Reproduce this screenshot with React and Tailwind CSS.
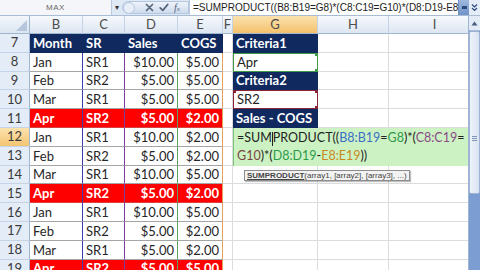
import React from "react";

const rows = [
  [8, "Jan", "SR1", "$10.00", "$5.00"],
  [9, "Feb", "SR2", "$5.00", "$5.00"],
  [10, "Mar", "SR1", "$5.00", "$5.00"],
  [11, "Apr", "SR2", "$5.00", "$2.00"],
  [12, "Jan", "SR1", "$10.00", "$2.00"],
  [13, "Feb", "SR2", "$5.00", "$2.00"],
  [14, "Mar", "SR1", "$10.00", "$5.00"],
  [15, "Apr", "SR2", "$5.00", "$2.00"],
  [16, "Jan", "SR1", "$10.00", "$5.00"],
  [17, "Feb", "SR2", "$5.00", "$2.00"],
  [18, "Mar", "SR1", "$5.00", "$2.00"],
  [19, "Apr", "SR2", "$5.00", "$5.00"],
];

// right border colours of the referenced ranges B, C, D, E
const rangeBorder = [
  "border-r-[#3d3db0]",
  "border-r-[#7b3e9e]",
  "border-r-[#5f9f62]",
  "border-r-[#e6a15c]",
];

const gCells = {
  7: { text: "Criteria1", kind: "navy" },
  8: { text: "Apr", kind: "green" },
  9: { text: "Criteria2", kind: "navy" },
  10: { text: "SR2", kind: "red" },
  11: { text: "Sales - COGS", kind: "navy" },
};

const cell = "flex items-end pb-[1px] leading-[15px] overflow-hidden whitespace-nowrap";
const plain = "border-b border-r border-[#dadcdd] bg-white";

function RowHead({ n, active }) {
  return (
    <div
      className={
        "flex items-center justify-center leading-[15px] border-b border-r border-b-[#c5d3e6] border-r-[#9eb6ce] text-[#3a3a3a] " +
        (active
          ? "bg-linear-to-b from-[#fbe2ad] to-[#f4c572]"
          : "bg-[#e4ecf7]")
      }
    >
      {n}
    </div>
  );
}

function ColHead({ label, active }) {
  return (
    <div
      className={
        "flex items-center justify-center leading-[15px] border-b border-r border-b-[#9eb6ce] border-r-[#c5d3e6] text-[#4d4d4d] " +
        (active
          ? "bg-linear-to-b from-[#fbe2ad] to-[#f3c16c]"
          : "bg-linear-to-b from-[#f6f9fd] to-[#dde6f1]")
      }
    >
      {label}
    </div>
  );
}

function GCell({ n }) {
  const g = gCells[n];
  if (!g) return <div className={plain}></div>;
  if (g.kind === "navy")
    return (
      <div className={cell + " bg-[#10295f] text-white font-bold px-[3px] border-b border-r border-[#10295f]"}>
        {g.text}
      </div>
    );
  if (g.kind === "green")
    return (
      <div className={cell + " relative bg-white text-[#222] px-[3px] border border-[#3f9b46]"}>
        {g.text}
        <span className="absolute -right-[2px] -bottom-[2px] w-[4px] h-[4px] bg-[#3f9b46]"></span>
        <span className="absolute -right-[2px] -top-[2px] w-[4px] h-[4px] bg-[#3f9b46]"></span>
      </div>
    );
  return (
    <div className={cell + " relative bg-white text-[#222] px-[3px] border border-[#8a2436]"}>
      {g.text}
      <span className="absolute -left-[2px] -top-[2px] w-[4px] h-[4px] bg-[#8a2436]"></span>
      <span className="absolute -right-[2px] -top-[2px] w-[4px] h-[4px] bg-[#8a2436]"></span>
      <span className="absolute -right-[2px] -bottom-[2px] w-[4px] h-[4px] bg-[#8a2436]"></span>
    </div>
  );
}

function FormulaBar() {
  return (
    <div className="flex h-[16px] border-b border-[#a9bcd6] bg-[#dfe8f5] font-['Liberation_Sans',sans-serif]">
      <div className="w-[112px] flex items-center justify-center bg-[#f4f6fa] border-r border-[#b9c9de] text-[8px] leading-none text-[#666] tracking-[0.5px]">
        MAX
      </div>
      <div className="w-[10px] flex items-center justify-center text-[8px] leading-none text-[#333]">▾</div>
      <div className="w-[67px] my-[1px] flex items-center rounded-l-full bg-linear-to-b from-[#eef3fa] to-[#cfdcee] border border-[#b4c6de]">
        <span className="w-[12px] h-[12px] rounded-full border border-[#b4c6de] bg-[#e7eef8]"></span>
        <svg className="ml-[10px]" width="9" height="9" viewBox="0 0 9 9">
          <path d="M1.5 1.5 L7.5 7.5 M7.5 1.5 L1.5 7.5" stroke="#56667c" strokeWidth="1.7" strokeLinecap="round" />
        </svg>
        <svg className="ml-[5px]" width="10" height="9" viewBox="0 0 10 9">
          <path d="M1.2 4.8 L3.8 7.4 L8.8 1.4" stroke="#56667c" strokeWidth="1.7" fill="none" strokeLinecap="round" strokeLinejoin="round" />
        </svg>
        <span className="ml-[5px] text-[10px] leading-none italic text-[#4f5f76] font-['Liberation_Serif',serif]">
          f<span className="text-[7px]">x</span>
        </span>
      </div>
      <div className="flex-1 flex items-center bg-white border-l border-[#b9c9de] pl-[3px] text-[10px] leading-none text-[#222] whitespace-nowrap overflow-hidden">
        =SUMPRODUCT((B8:B19=G8)*(C8:C19=G10)*(D8:D19-E8:E19))
      </div>
      <div className="w-[11px] flex items-center justify-center bg-linear-to-b from-[#9fb9df] to-[#6f92c8] border-l border-[#6f8fbf]">
        <span className="w-[5px] h-[3px] bg-[#2c4a7c]"></span>
      </div>
      <div className="w-[11px] flex items-center justify-center bg-[#e4ecf7]">
        <svg width="7" height="9" viewBox="0 0 7 9">
          <path d="M1 1.5 L3.5 4 L6 1.5 M1 5 L3.5 7.5 L6 5" stroke="#2c4a7c" strokeWidth="1.2" fill="none" />
        </svg>
      </div>
    </div>
  );
}

function Scrollbar() {
  return (
    <div className="w-[12px] flex flex-col bg-[#7c9dd2] border-l border-[#9fb4d3]">
      <div className="h-[15px] flex items-center justify-center bg-[#e3ebf6] border-b border-[#a8bcd9]">
        <svg width="7" height="5" viewBox="0 0 7 5">
          <polygon points="3.5,0.5 6.5,4.5 0.5,4.5" fill="#4a5d7e" />
        </svg>
      </div>
      <div className="h-[163px] flex flex-col items-center justify-end pb-[52px] gap-[1px] bg-linear-to-r from-[#eef3fa] to-[#d8e3f2] border border-[#9fb4d3] rounded-[2px]">
        <span className="w-[5px] h-[1px] bg-[#7f95b8]"></span>
        <span className="w-[5px] h-[1px] bg-[#7f95b8]"></span>
        <span className="w-[5px] h-[1px] bg-[#7f95b8]"></span>
      </div>
      <div className="flex-1"></div>
    </div>
  );
}

export default function App() {
  return (
    <div className="w-[480px] h-[270px] overflow-hidden bg-white font-['Lato','Liberation_Sans',sans-serif] text-[13px]">
      <FormulaBar />
      <div className="flex h-[254px]">
        <div className="relative w-[468px] overflow-hidden">
          <div className="grid grid-cols-[30px_53px_42px_53px_45px_10px_85px_71px_92px] grid-rows-[18px_repeat(13,18.8px)]">
            {/* corner */}
            <div className="relative border-b border-r border-b-[#9eb6ce] border-r-[#9eb6ce] bg-linear-to-b from-[#f3f7fc] to-[#dce5f1]">
              <svg className="absolute right-[2px] bottom-[2px]" width="11" height="11" viewBox="0 0 11 11">
                <polygon points="11,0 11,11 0,11" fill="#b7c7db" />
              </svg>
            </div>
            {["B", "C", "D", "E", "F", "G", "H", "I"].map((c) => (
              <ColHead key={c} label={c} active={c === "G"} />
            ))}

            {/* row 7 */}
            <RowHead n={7} />
            {["Month", "SR", "Sales", "COGS"].map((h) => (
              <div key={h} className={cell + " bg-[#10295f] text-white font-bold px-[3px] border-b border-r border-[#10295f]"}>
                {h}
              </div>
            ))}
            <div className={plain}></div>
            <GCell n={7} />
            <div className={plain}></div>
            <div className={plain}></div>

            {rows.map(([n, m, sr, s, c]) => {
              const hot = m === "Apr";
              const base = hot
                ? cell + " bg-[#ff0000] text-white font-bold border-b border-r border-b-[#d94040] px-[3px] "
                : cell + " bg-white text-[#262626] border-b border-r border-b-[#a5a5a5] px-[3px] ";
              return (
                <React.Fragment key={n}>
                  <RowHead n={n} active={n === 12} />
                  <div className={base + rangeBorder[0]}>{m}</div>
                  <div className={base + rangeBorder[1]}>{sr}</div>
                  <div className={base + "justify-end " + rangeBorder[2]}>{s}</div>
                  <div className={base + "justify-end " + rangeBorder[3]}>{c}</div>
                  <div className={plain}></div>
                  <GCell n={n} />
                  <div className={plain}></div>
                  <div className={plain}></div>
                </React.Fragment>
              );
            })}
          </div>

          {/* in-cell formula editor over G12:I13 */}
          <div className="absolute left-[233px] top-[112px] w-[235px] h-[38px] bg-[#ccf2c4] border-l border-[#7cc47c] pl-[3px] pt-[1px] text-[12.5px] leading-[18px] text-[#222] whitespace-nowrap">
            <div>
              =SUM<span className="inline-block w-[1px] h-[14px] align-middle bg-[#222]"></span>PRODUCT((
              <span className="text-[#3b6fc4]">B8:B19</span>=
              <span className="text-[#2e9a4a]">G8</span>)*(
              <span className="text-[#8a4a86]">C8:C19</span>=
            </div>
            <div>
              <span className="text-[#7a4440]">G10</span>)*(
              <span className="text-[#2e9a4a]">D8:D19</span>-
              <span className="text-[#c88a1c]">E8:E19</span>))
            </div>
          </div>

          {/* argument tooltip */}
          <div className="absolute left-[244px] top-[154px] h-[11px] flex items-center px-[2px] bg-[#f2f2f2] border border-[#8c8c8c] shadow-[1px_1px_1px_rgba(0,0,0,0.25)] text-[8px] leading-none text-[#444] font-['Liberation_Sans',sans-serif] whitespace-nowrap">
            <span className="font-bold underline">SUMPRODUCT</span>(array1, [array2], [array3], ...)
          </div>
        </div>
        <Scrollbar />
      </div>
    </div>
  );
}
